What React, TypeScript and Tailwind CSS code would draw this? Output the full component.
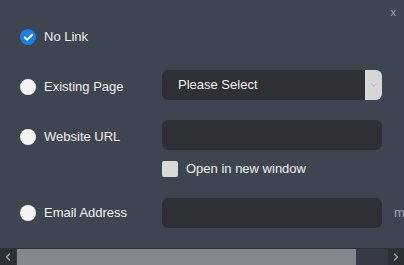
import { Check, ChevronDown, ChevronLeft, ChevronRight } from 'lucide-react'

const font = { fontFamily: '"Liberation Sans", Arial, sans-serif' }

const Radio = ({ checked }: { checked?: boolean }) =>
  checked ? (
    <span className="w-4 h-4 rounded-full bg-[#1b7fe3] flex items-center justify-center shrink-0">
      <Check className="w-[11px] h-[11px] text-white" strokeWidth={4} />
    </span>
  ) : (
    <span className="w-4 h-4 rounded-full bg-[#f4f4f4] shrink-0" />
  )

const Label = ({ text, checked, shift }: { text: string; checked?: boolean; shift?: boolean }) => (
  <div className={shift ? 'w-[142px] shrink-0 flex items-center gap-2 mt-[4px]' : 'w-[142px] shrink-0 flex items-center gap-2'}>
    <Radio checked={checked} />
    <span className="text-[13px] text-[#f2f2f2]">{text}</span>
  </div>
)

const Field = () => <div className="w-[220px] h-[30px] rounded-md bg-[#2e3036] shrink-0" />

export default function App() {
  return (
    <div className="w-[404px] h-[265px] bg-[#3f4451] overflow-hidden flex flex-col" style={font}>
      <div className="relative flex-1 flex flex-col pl-5">
        <span className="absolute top-[4px] right-[8px] text-[11px] text-[#a3a7ae]">x</span>

        <div className="mt-[22px] h-[30px] flex items-center">
          <Label text="No Link" checked />
        </div>

        <div className="mt-[18px] h-[30px] flex items-center">
          <Label text="Existing Page" shift />
          <div className="w-[220px] h-[30px] rounded-md bg-[#2e3036] flex overflow-hidden">
            <span className="flex-1 pl-4 flex items-center text-[13px] text-[#f2f2f2]">Please Select</span>
            <span className="w-[17px] bg-[#d6d6d6] flex items-center justify-center">
              <ChevronDown className="w-[10px] h-[10px] text-[#9a9a9a]" strokeWidth={1.5} />
            </span>
          </div>
        </div>

        <div className="mt-[20px] h-[30px] flex items-center">
          <Label text="Website URL" shift />
          <Field />
        </div>

        <div className="mt-[11px] h-4 flex items-center pl-[142px] gap-2">
          <span className="w-4 h-4 rounded-[2px] bg-[#d9d9d9] shrink-0" />
          <span className="text-[13px] text-[#f2f2f2]">Open in new window</span>
        </div>

        <div className="mt-[21px] h-[30px] flex items-center">
          <Label text="Email Address" />
          <Field />
          <span className="ml-3 text-[13px] text-[#a3a7ae] whitespace-nowrap">m</span>
        </div>
      </div>

      <div className="h-[17px] flex bg-[#363a45] border-t border-[#2c3039]">
        <span className="w-4 bg-[#2b2f38] flex items-center justify-center">
          <ChevronLeft className="w-3 h-3 text-[#9ca0a8]" strokeWidth={3} />
        </span>
        <span className="ml-px w-[339px] bg-[#84888e]" />
        <span className="flex-1" />
        <span className="w-4 bg-[#2b2f38] flex items-center justify-center">
          <ChevronRight className="w-3 h-3 text-[#9ca0a8]" strokeWidth={3} />
        </span>
      </div>
    </div>
  )
}
